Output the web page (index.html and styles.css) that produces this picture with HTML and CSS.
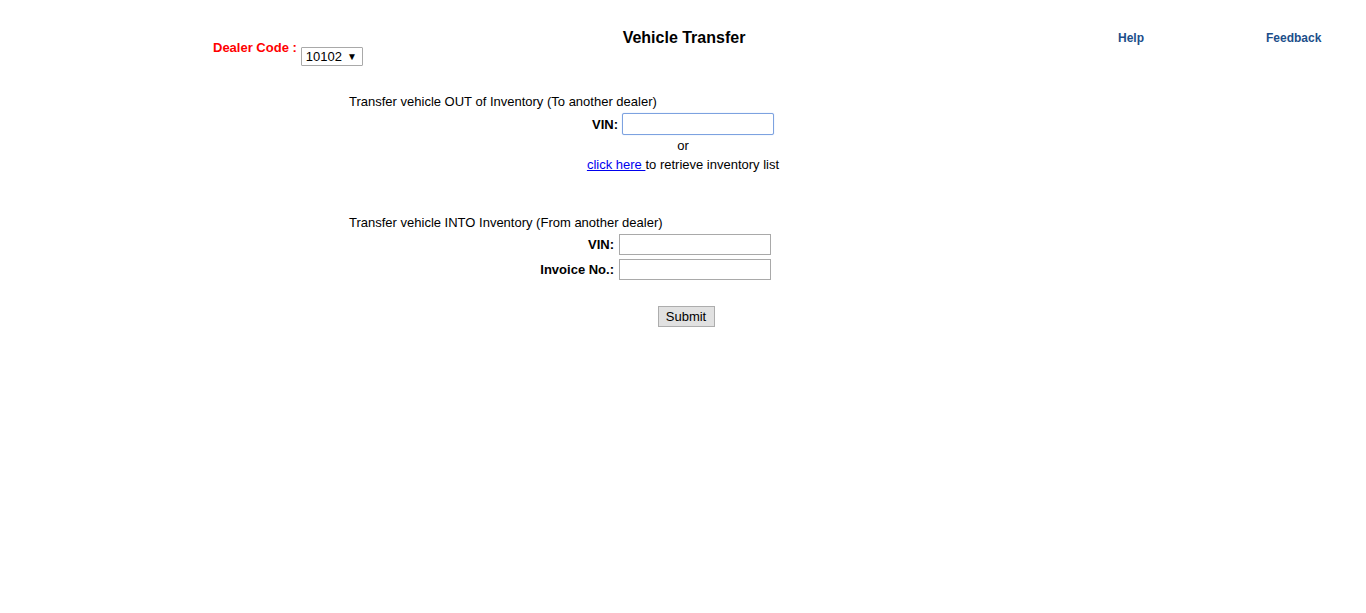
FILE: index.html
```html
<!DOCTYPE html>
<html>
<head>
<meta charset="utf-8">
<title>Vehicle Transfer</title>
<link rel="stylesheet" href="styles.css">
</head>
<body>
<div class="header">
  <div class="dealer">
    <span class="dealer-label">Dealer Code :</span>
    <span class="select">10102 <span class="arrow">&#9660;</span></span>
  </div>
  <div class="title">Vehicle Transfer</div>
  <div class="spacer"></div>
  <a class="toplink" href="#">Help</a>
  <a class="toplink" href="#">Feedback</a>
</div>

<div class="form">
  <div class="section-title">Transfer vehicle OUT of Inventory (To another dealer)</div>
  <div class="row">
    <label class="label label-out">VIN:</label>
    <span class="input input-focus"></span>
  </div>
  <div class="center or">or</div>
  <div class="center retrieve"><a href="#">click here </a>to retrieve inventory list</div>

  <div class="section-title section-in">Transfer vehicle INTO Inventory (From another dealer)</div>
  <div class="row row-in">
    <label class="label">VIN:</label>
    <span class="input"></span>
  </div>
  <div class="row row-in2">
    <label class="label">Invoice No.:</label>
    <span class="input"></span>
  </div>
  <div class="submit-row"><span class="button">Submit</span></div>
</div>
</body>
</html>
```

FILE: styles.css
```css
html, body {
  margin: 0;
  padding: 0;
  background: #fff;
  font-family: "Liberation Sans", Arial, sans-serif;
  font-size: 13px;
  color: #000;
}

.header {
  display: grid;
  grid-template-columns: 401px 140px 364px 148px auto;
  padding-left: 213px;
  padding-top: 28px;
  align-items: start;
}

.dealer {
  display: flex;
  align-items: flex-start;
  padding-top: 12px;
}

.dealer-label {
  color: #ff0000;
  font-weight: bold;
  font-size: 13px;
  line-height: 15px;
  margin-right: 4px;
}

.select {
  display: inline-flex;
  align-items: center;
  box-sizing: border-box;
  margin-top: 7px;
  width: 62px;
  height: 19px;
  border: 1px solid #a9a9a9;
  border-radius: 1px;
  padding-left: 4px;
  font-size: 13px;
  color: #000;
  gap: 5px;
}

.arrow {
  font-size: 10px;
  line-height: 1;
}

.title {
  text-align: center;
  font-weight: bold;
  font-size: 16px;
  line-height: 19px;
}

.toplink {
  font-weight: bold;
  font-size: 12px;
  color: #1c4e8a;
  text-decoration: none;
  line-height: 14px;
  padding-top: 3px;
}

.form {
  width: 668px;
  margin: 0 auto;
  padding-top: 28px;
}

.section-title {
  line-height: 15px;
}

.section-in {
  margin-top: 43px;
}

.row {
  display: grid;
  grid-template-columns: 269px auto;
  column-gap: 4px;
  align-items: center;
  margin-top: 4px;
}

.row-in, .row-in2 {
  grid-template-columns: 265px auto;
  column-gap: 5px;
}

.row-in2 {
  margin-top: 4px;
}

.label {
  text-align: right;
  font-weight: bold;
}

.input {
  display: block;
  box-sizing: border-box;
  width: 152px;
  height: 21px;
  border: 1px solid #a9a9a9;
  background: #fff;
}

.input-focus {
  height: 22px;
  border: 1px solid #7da2e0;
  border-radius: 2px;
  box-shadow: 0 0 1px #9bbcf0;
}

.center {
  text-align: center;
  line-height: 15px;
}

.or {
  margin-top: 3px;
}

.retrieve {
  margin-top: 4px;
}

.retrieve a {
  color: #0000ee;
  text-decoration: underline;
}

.submit-row {
  text-align: center;
  margin-top: 26px;
  padding-left: 6px;
}

.button {
  display: inline-block;
  box-sizing: border-box;
  width: 57px;
  height: 21px;
  line-height: 19px;
  border: 1px solid #adadad;
  background: #e1e1e1;
  text-align: center;
  font-size: 13px;
}
```
